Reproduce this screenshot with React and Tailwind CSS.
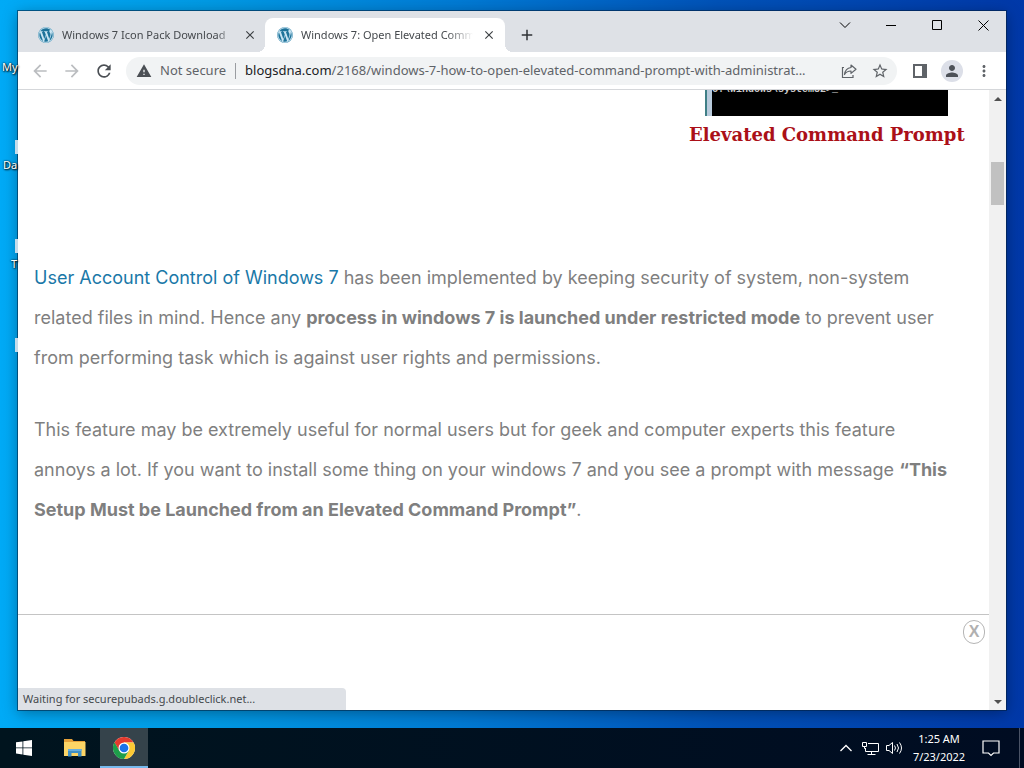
import React from "react";
import { FaWordpress } from "react-icons/fa";
import {
  MdArrowBack,
  MdArrowForward,
  MdRefresh,
  MdWarning,
  MdStarBorder,
  MdPerson,
  MdMoreVert,
  MdClose,
  MdAdd,
} from "react-icons/md";

function Favicon() {
  return (
    <span className="flex size-4 shrink-0 items-center justify-center rounded-full bg-[#c9e4f2]">
      <FaWordpress className="size-4 text-[#1d7299]" />
    </span>
  );
}

function Tab({ title, active }) {
  return (
    <div
      className={
        active
          ? "relative z-10 flex h-[34px] w-60 items-center rounded-t-lg bg-white pl-3 pr-2"
          : "flex h-[34px] w-[247px] items-center pl-5 pr-[7px]"
      }
    >
      {active && (
        <>
          <span className="absolute bottom-0 -left-2 size-2 bg-[radial-gradient(circle_at_0_0,transparent_8px,#fff_8px)]" />
          <span className="absolute right-[-8px] bottom-0 size-2 bg-[radial-gradient(circle_at_100%_0,transparent_8px,#fff_8px)]" />
        </>
      )}
      <Favicon />
      <button
        className={
          "ml-2 min-w-0 flex-1 overflow-hidden whitespace-nowrap pt-px text-left text-[11px] text-[#45494d] " +
          (active
            ? "[mask-image:linear-gradient(to_right,#000_85%,transparent)]"
            : "[mask-image:linear-gradient(to_right,#000_90%,transparent)]")
        }
      >
        {title}
      </button>
      <button aria-label={"Close " + title} className="ml-2 flex size-4 shrink-0 items-center justify-center">
        <MdClose className="size-[14px] text-[#3c4043]" />
      </button>
    </div>
  );
}

function WindowControls() {
  return (
    <div className="ml-auto flex h-7 text-black">
      <button aria-label="Search tabs" className="flex w-[46px] items-center justify-center">
        <svg width="12" height="12" viewBox="0 0 12 12" fill="none" stroke="currentColor">
          <path d="M1 3.5l5 5 5-5" />
        </svg>
      </button>
      <button aria-label="Minimize" className="flex w-[46px] items-center justify-center">
        <svg width="10" height="10" viewBox="0 0 10 10" stroke="currentColor">
          <path d="M0 5.5h10" />
        </svg>
      </button>
      <button aria-label="Maximize" className="flex w-[46px] items-center justify-center">
        <svg width="10" height="10" viewBox="0 0 10 10" fill="none" stroke="currentColor">
          <path d="M.5.5h9v9h-9z" />
        </svg>
      </button>
      <button aria-label="Close" className="flex w-[46px] items-center justify-center">
        <svg width="11" height="11" viewBox="0 0 11 11" stroke="currentColor">
          <path d="M.5.5l10 10M10.5.5l-10 10" />
        </svg>
      </button>
    </div>
  );
}

function Toolbar() {
  return (
    <div className="flex h-[38px] shrink-0 items-center border-b border-[#d5d7da] bg-white pr-[13px] pl-3 text-[#5f6368]">
      <button aria-label="Back" className="mr-3 text-[#bbbdc0]">
        <MdArrowBack className="size-5" />
      </button>
      <button aria-label="Forward" className="mr-3 text-[#bbbdc0]">
        <MdArrowForward className="size-5" />
      </button>
      <button aria-label="Reload" className="mr-3 text-[#4b4f54]">
        <MdRefresh className="size-5" />
      </button>
      <div className="flex h-7 min-w-0 flex-1 items-center rounded-full bg-[#f1f3f4] pr-2 pl-2.5 text-[13px]">
        <MdWarning className="size-4 shrink-0 text-[#4b4f54]" />
        <span className="ml-2 shrink-0 pt-px">Not secure</span>
        <span className="mr-[9px] ml-[9px] h-4 w-px shrink-0 bg-[#9a9da1]" />
        <a href="#article" className="min-w-0 flex-1 truncate pt-px">
          <span className="text-[#202124]">blogsdna.com</span>
          /2168/windows-7-how-to-open-elevated-command-prompt-with-administrat...
        </a>
        <button aria-label="Share this page" className="ml-3">
          <svg width="16" height="16" viewBox="0 0 16 16" fill="none" stroke="currentColor" strokeWidth="1.2">
            <path d="M3 4.500H1.500v10h10.500V12" />
            <path d="M10 2l5 4.200-5 4.200V8C7 8 5 9 3.500 11.500 4 7.500 6 5 10 4.500z" strokeLinejoin="round" />
          </svg>
        </button>
        <button aria-label="Bookmark this page" className="ml-3.5">
          <MdStarBorder className="size-[18px]" />
        </button>
      </div>
      <button aria-label="Side panel" className="ml-4">
        <svg width="14" height="14" viewBox="0 0 14 14" fill="currentColor">
          <path fillRule="evenodd" d="M0 0h14v14H0zM2 2v10h7V2z" />
        </svg>
      </button>
      <button aria-label="Profile" className="ml-3.5 flex size-[22px] items-center justify-center rounded-full bg-[#dcdfe8]">
        <MdPerson className="size-[18px] text-[#4d5158]" />
      </button>
      <button aria-label="Menu" className="ml-3">
        <MdMoreVert className="size-[18px]" />
      </button>
    </div>
  );
}

function Article() {
  return (
    <main id="article" className="min-w-0 flex-1 overflow-hidden px-4 font-['Inter','Liberation_Sans',sans-serif]">
      <figure className="ml-auto w-[284px]">
        <div className="ml-4 flex h-[26px] w-[243px] overflow-hidden border-l-2 border-[#3f7f86] bg-black">
          <span className="w-[5px] shrink-0 bg-[#b9cbdc]" />
          <span className="-mt-1.5 font-['Liberation_Mono',monospace] text-[10px] leading-3 font-bold whitespace-nowrap text-[#c9c9c9]">
            C:\Windows\system32&gt;_
          </span>
        </div>
        <figcaption className="mt-[5px] font-['DejaVu_Serif',serif] text-lg leading-7 font-bold whitespace-nowrap text-[#ab1018]">
          Elevated Command Prompt
        </figcaption>
      </figure>
      <div className="mt-[109px] text-[18px] leading-10 whitespace-nowrap text-[#7f7f7f]">
        <p>
          <a href="#uac" className="text-[#1a78a8]">
            User Account Control of Windows 7
          </a>{" "}
          has been implemented by keeping security of system, non-system
          <br />
          related files in mind. Hence any{" "}
          <strong className="font-bold">process in windows 7 is launched under restricted mode</strong> to prevent user
          <br />
          from performing task which is against user rights and permissions.
        </p>
        <p className="mt-8">
          This feature may be extremely useful for normal users but for geek and computer experts this feature
          <br />
          annoys a lot. If you want to install some thing on your windows 7 and you see a prompt with message{" "}
          <strong className="font-bold">
            “This
            <br />
            Setup Must be Launched from an Elevated Command Prompt”
          </strong>
          .
        </p>
      </div>
    </main>
  );
}

function Scrollbar() {
  return (
    <div className="flex w-[17px] shrink-0 flex-col items-center bg-[#f1f1f1] text-[#505050]">
      <button aria-label="Scroll up" className="flex h-[17px] w-full items-center justify-center">
        <svg width="8" height="4" viewBox="0 0 8 4" fill="currentColor">
          <path d="M0 4l4-4 4 4z" />
        </svg>
      </button>
      <div className="mt-[55px] h-[43px] w-[13px] bg-[#c1c1c1]" />
      <button aria-label="Scroll down" className="mt-auto flex h-[17px] w-full items-center justify-center">
        <svg width="8" height="4" viewBox="0 0 8 4" fill="currentColor">
          <path d="M0 0l4 4 4-4z" />
        </svg>
      </button>
    </div>
  );
}

function BrowserWindow() {
  return (
    <div className="mx-[18px] mt-[11px] mb-[18px] flex min-h-0 flex-1 flex-col bg-white shadow-[0_0_0_1px_rgba(0,30,60,0.55),0_3px_14px_rgba(0,0,0,0.35)]">
      <div className="flex h-[41px] shrink-0 bg-[#dee1e6]">
        <div className="flex items-end">
          <Tab title="Windows 7 Icon Pack Download" />
          <Tab title="Windows 7: Open Elevated Comm" active />
          <button aria-label="New tab" className="ml-3 flex h-[34px] w-5 items-center justify-center">
            <MdAdd className="size-[18px] text-[#2f3236]" />
          </button>
        </div>
        <WindowControls />
      </div>
      <Toolbar />
      <div className="flex min-h-0 flex-1">
        <div className="flex min-w-0 flex-1 flex-col">
          <div className="flex min-h-0 flex-1">
            <Article />
          </div>
          <footer className="flex h-24 shrink-0 items-end justify-between border-t border-[#c4c4c4]">
            <div className="flex h-[22px] w-[328px] items-center rounded-tr-sm bg-[#dee1e6] pt-px pl-[5px] text-[11px] text-[#45494d]">
              Waiting for securepubads.g.doubleclick.net...
            </div>
            <button
              aria-label="Close ad"
              className="mt-[5px] mr-1 flex h-6 w-[22px] items-center justify-center self-start rounded-full border border-[#b5b5b5] font-['Liberation_Sans',sans-serif] text-base font-bold text-[#b0b0b0]"
            >
              X
            </button>
          </footer>
        </div>
        <Scrollbar />
      </div>
    </div>
  );
}

function DesktopIcons() {
  return (
    <ul className="absolute top-0 left-0 w-[18px] text-[11px] leading-[18px] whitespace-nowrap text-white [text-shadow:1px_1px_2px_#000,0_0_2px_#000]">
      <li className="mt-[58px] h-[82px] pl-0.5">My</li>
      <li className="h-[99px]">
        <span className="ml-[15px] block h-[14px] w-[3px] bg-[#c5dcea]" />
        <span className="block pt-0.5 pl-[3px]">Da</span>
      </li>
      <li className="h-[99px]">
        <span className="ml-[15px] block h-[14px] w-[3px] bg-[#c5dcea]" />
        <span className="block pt-0.5 pl-[11px]">T</span>
      </li>
      <li>
        <span className="ml-[15px] block h-[14px] w-[3px] bg-[#c5dcea]" />
      </li>
    </ul>
  );
}

function Taskbar() {
  return (
    <div className="flex h-10 shrink-0 items-stretch bg-linear-to-r from-[#00141e] to-[#000c22] text-white">
      <button aria-label="Start" className="flex w-12 items-center justify-center">
        <svg width="16" height="16" viewBox="0 0 16 16" fill="currentColor">
          <path d="M0 2.300l6.500-.9v6.100H0zM7.300 1.300L16 0v7.500H7.300zM0 8.300h6.500v6.200L0 13.600zM7.300 8.300H16V16l-8.700-1.300z" />
        </svg>
      </button>
      <button aria-label="File Explorer" className="ml-[3px] flex w-12 items-center justify-center">
        <svg width="22" height="18" viewBox="0 0 22 18">
          <path d="M0 0h8l1.500 2H21v4H0z" fill="#e6a23a" />
          <path d="M0 3h21.500v14H0z" fill="#fcd566" />
          <path d="M4 17.500V10h13.500v7.500h-3.500V14H7.500v3.500z" fill="#3f8fc4" />
          <path d="M4 10h13.500v2H4z" fill="#67aede" />
        </svg>
      </button>
      <button aria-label="Google Chrome" className="ml-px flex w-12 items-center justify-center border-b-2 border-[#76b9ed] bg-[#35434b] pt-0.5">
        <svg width="22" height="22" viewBox="0 0 48 48">
          <circle cx="24" cy="24" r="24" fill="#fff" />
          <path d="M24 24L3.200 12A24 24 0 0 1 44.800 12H24z" fill="#e33b2e" />
          <path d="M24 12h20.800A24 24 0 0 1 24 48L34.400 30z" fill="#fcc934" />
          <path d="M3.200 12A24 24 0 0 0 24 48l10.400-18L24 24l-10.400 6z" fill="#1e9e4a" />
          <path d="M3.200 12l10.400 18L24 24V12z" fill="#e33b2e" />
          <path d="M3.200 12L13.600 30 10 30 1 18z" fill="#1e9e4a" />
          <circle cx="24" cy="24" r="12" fill="#fff" />
          <circle cx="24" cy="24" r="9.500" fill="#1a73e8" />
        </svg>
      </button>
      <div className="ml-auto flex items-center">
        <button aria-label="Show hidden icons">
          <svg width="12" height="8" viewBox="0 0 12 8" fill="none" stroke="currentColor" strokeWidth="1.300">
            <path d="M.5 7L6 1.500 11.500 7" />
          </svg>
        </button>
        <button aria-label="Network" className="ml-2.5">
          <svg width="17" height="15" viewBox="0 0 17 15" fill="none" stroke="currentColor">
            <path d="M6 2.500h10.500v8H3.500V7M9.500 10.500v3M5.500 13.500h8" />
            <path d="M.5 1.500h4v4h-4zM2.500 5.500v2h1" />
          </svg>
        </button>
        <button aria-label="Volume" className="ml-[7px]">
          <svg width="18" height="14" viewBox="0 0 18 14" fill="none" stroke="currentColor">
            <path d="M.5 4.500h2.500L6.500 1.500v11L3 9.500H.5z" />
            <path d="M8.500 4.500q2 2.500 0 5M11 3q3 4 0 8M13.500 1.500q4 5.500 0 11" />
          </svg>
        </button>
        <button className="ml-2 w-[54px] text-center text-[11px] leading-[18px] whitespace-nowrap">
          1:25 AM
          <br />
          7/23/2022
        </button>
        <button aria-label="Notifications" className="ml-4">
          <svg width="18" height="17" viewBox="0 0 18 17" fill="none" stroke="currentColor" strokeWidth="1.200">
            <path d="M1 1h16v12h-5.500L9 15.500 6.500 13H1z" />
          </svg>
        </button>
      </div>
      <button aria-label="Show desktop" className="ml-[19px] w-[5px] border-l border-[#4a5366]" />
    </div>
  );
}

export default function App() {
  return (
    <div className="relative flex h-screen flex-col overflow-hidden bg-[linear-gradient(90deg,#00aaf6_0%,#009ae4_20%,#007ad4_45%,#0052b8_70%,#0038a8_100%)] font-['Noto_Sans','Open_Sans',sans-serif]">
      <DesktopIcons />
      <BrowserWindow />
      <Taskbar />
    </div>
  );
}
